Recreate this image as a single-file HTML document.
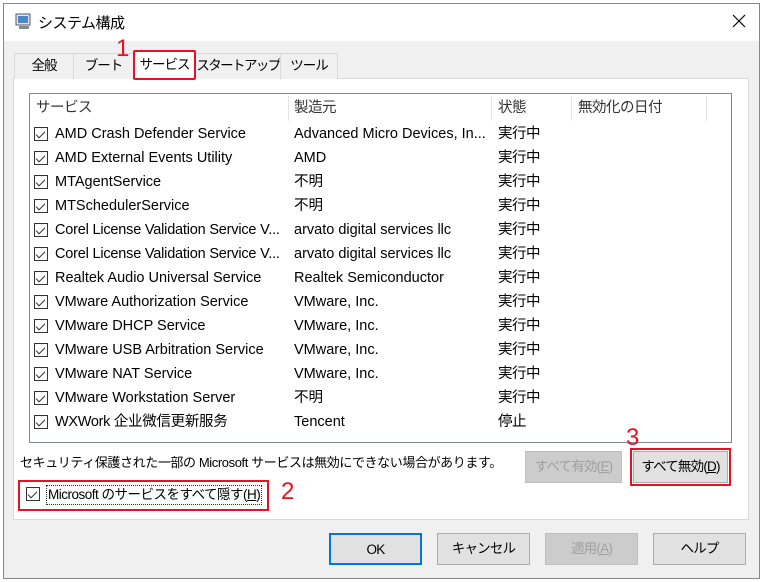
<!DOCTYPE html>
<html><head><meta charset="utf-8"><style>
*{margin:0;padding:0;box-sizing:border-box}
body{width:764px;height:582px;background:#fff;font-family:"Liberation Sans","Noto Sans CJK JP",sans-serif;font-size:14.5px;color:#000;position:relative;overflow:hidden}
.a{position:absolute}
.win{left:3px;top:3px;width:757px;height:576px;border:1px solid #888;background:#f0f0f0}
.title{left:4px;top:4px;width:755px;height:37px;background:#fff}
.tab{top:53px;height:26px;border:1px solid #d9d9d9;border-bottom:none;background:#f0f0f0;text-align:center;line-height:24px;font-size:13.5px;letter-spacing:-1px;white-space:nowrap;overflow:hidden}
.panel{left:13px;top:78px;width:736px;height:442px;background:#fff;border:1px solid #d9d9d9}
.list{left:29px;top:93px;width:703px;height:350px;border:1px solid #828790;background:#fff}
.hd{top:96px;height:25px;line-height:24px;color:#333;letter-spacing:-0.5px}
.sep{top:96px;width:1px;height:25px;background:#e5e5e5}
.row{left:34px;height:24px;line-height:24px;width:690px}
.cb{position:absolute;left:0;top:5px;width:14px;height:14px;border:1px solid #333;background:#fff}
.cb:after{content:"";position:absolute;left:3px;top:1px;width:4px;height:8px;border:solid #333;border-width:0 1.3px 1.3px 0;transform:rotate(45deg)}
.c1{position:absolute;left:21px;white-space:nowrap}
.c2{position:absolute;left:260px;white-space:nowrap}
.c3{position:absolute;left:464px;letter-spacing:-0.5px}
.btn{height:32px;border:1px solid #adadad;background:#e1e1e1;text-align:center;line-height:30px;font-size:13.5px;letter-spacing:-0.8px;white-space:nowrap}
.dis{color:#a0a0a0;background:#ccc;border-color:#bfbfbf}
.red{border:2px solid #e81123}
.num{color:#e81123;font-size:24px}
</style></head><body>
<div class="a win"></div>
<div class="a title"></div>
<svg class="a" style="left:15px;top:13px" width="18" height="18"><rect x="1" y="1" width="14" height="11" fill="#dfe6f0" stroke="#556"/><rect x="3" y="3" width="10" height="7" fill="#4a86c8"/><rect x="4" y="13" width="10" height="3" fill="#888"/></svg>
<div class="a" style="left:38px;top:12px;font-size:15px;letter-spacing:-0.5px">システム構成</div>
<svg class="a" style="left:732px;top:14px" width="14" height="14"><path d="M1 1L13 13M13 1L1 13" stroke="#000" stroke-width="1.2"/></svg>
<div class="a panel"></div>
<div class="a tab" style="left:14px;width:60px">全般</div>
<div class="a tab" style="left:73px;width:61px">ブート</div>
<div class="a tab" style="left:195px;width:86px;letter-spacing:-1.6px">スタートアップ</div>
<div class="a tab" style="left:280px;width:58px">ツール</div>
<div class="a tab" style="left:133px;top:50px;height:29px;width:63px;background:#fff;line-height:28px;border-bottom:1px solid #fff">サービス</div>
<div class="a red" style="left:133px;top:50px;width:63px;height:30px;border-radius:2px"></div>
<div class="a num" style="left:116px;top:35px">1</div>
<div class="a list"></div>
<div class="a hd" style="left:36px">サービス</div>
<div class="a hd" style="left:294px">製造元</div>
<div class="a hd" style="left:498px">状態</div>
<div class="a hd" style="left:578px">無効化の日付</div>
<div class="a sep" style="left:288px"></div>
<div class="a sep" style="left:491px"></div>
<div class="a sep" style="left:571px"></div>
<div class="a sep" style="left:706px"></div>
<div class="a row" style="top:122px"><span class="cb"></span><span class="c1">AMD Crash Defender Service</span><span class="c2">Advanced Micro Devices, In...</span><span class="c3">実行中</span></div>
<div class="a row" style="top:146px"><span class="cb"></span><span class="c1">AMD External Events Utility</span><span class="c2">AMD</span><span class="c3">実行中</span></div>
<div class="a row" style="top:170px"><span class="cb"></span><span class="c1">MTAgentService</span><span class="c2">不明</span><span class="c3">実行中</span></div>
<div class="a row" style="top:194px"><span class="cb"></span><span class="c1">MTSchedulerService</span><span class="c2">不明</span><span class="c3">実行中</span></div>
<div class="a row" style="top:218px"><span class="cb"></span><span class="c1" style="letter-spacing:-0.2px">Corel License Validation Service V...</span><span class="c2">arvato digital services llc</span><span class="c3">実行中</span></div>
<div class="a row" style="top:242px"><span class="cb"></span><span class="c1" style="letter-spacing:-0.2px">Corel License Validation Service V...</span><span class="c2">arvato digital services llc</span><span class="c3">実行中</span></div>
<div class="a row" style="top:266px"><span class="cb"></span><span class="c1">Realtek Audio Universal Service</span><span class="c2">Realtek Semiconductor</span><span class="c3">実行中</span></div>
<div class="a row" style="top:290px"><span class="cb"></span><span class="c1">VMware Authorization Service</span><span class="c2">VMware, Inc.</span><span class="c3">実行中</span></div>
<div class="a row" style="top:314px"><span class="cb"></span><span class="c1">VMware DHCP Service</span><span class="c2">VMware, Inc.</span><span class="c3">実行中</span></div>
<div class="a row" style="top:338px"><span class="cb"></span><span class="c1">VMware USB Arbitration Service</span><span class="c2">VMware, Inc.</span><span class="c3">実行中</span></div>
<div class="a row" style="top:362px"><span class="cb"></span><span class="c1">VMware NAT Service</span><span class="c2">VMware, Inc.</span><span class="c3">実行中</span></div>
<div class="a row" style="top:386px"><span class="cb"></span><span class="c1">VMware Workstation Server</span><span class="c2">不明</span><span class="c3">実行中</span></div>
<div class="a row" style="top:410px"><span class="cb"></span><span class="c1" style="letter-spacing:-0.3px">WXWork 企业微信更新服务</span><span class="c2">Tencent</span><span class="c3">停止</span></div>
<div class="a" style="left:20px;top:452px;font-size:13px;letter-spacing:-0.4px;white-space:nowrap">セキュリティ保護された一部の Microsoft サービスは無効にできない場合があります。</div>
<div class="a btn dis" style="left:525px;top:451px;width:97px">すべて有効(<u>E</u>)</div>
<div class="a btn" style="left:633px;top:451px;width:95px">すべて無効(<u>D</u>)</div>
<div class="a red" style="left:630px;top:448px;width:101px;height:38px"></div>
<div class="a num" style="left:626px;top:424px">3</div>
<div class="a red" style="left:18px;top:480px;width:251px;height:31px"></div>
<div class="a" style="left:26px;top:487px;width:16px;height:16px"><span class="cb" style="top:0;left:0"></span></div>
<div class="a" style="left:46px;top:485px;border:1px dotted #333;padding:0 1px;line-height:18px;white-space:nowrap;font-size:13.5px;letter-spacing:-0.5px">Microsoft のサービスをすべて隠す(<u>H</u>)</div>
<div class="a num" style="left:281px;top:478px">2</div>
<div class="a btn" style="left:329px;top:533px;width:93px;border:2px solid #0078d7">OK</div>
<div class="a btn" style="left:437px;top:533px;width:93px">キャンセル</div>
<div class="a btn dis" style="left:545px;top:533px;width:93px">適用(<u>A</u>)</div>
<div class="a btn" style="left:653px;top:533px;width:93px">ヘルプ</div>
</body></html>
